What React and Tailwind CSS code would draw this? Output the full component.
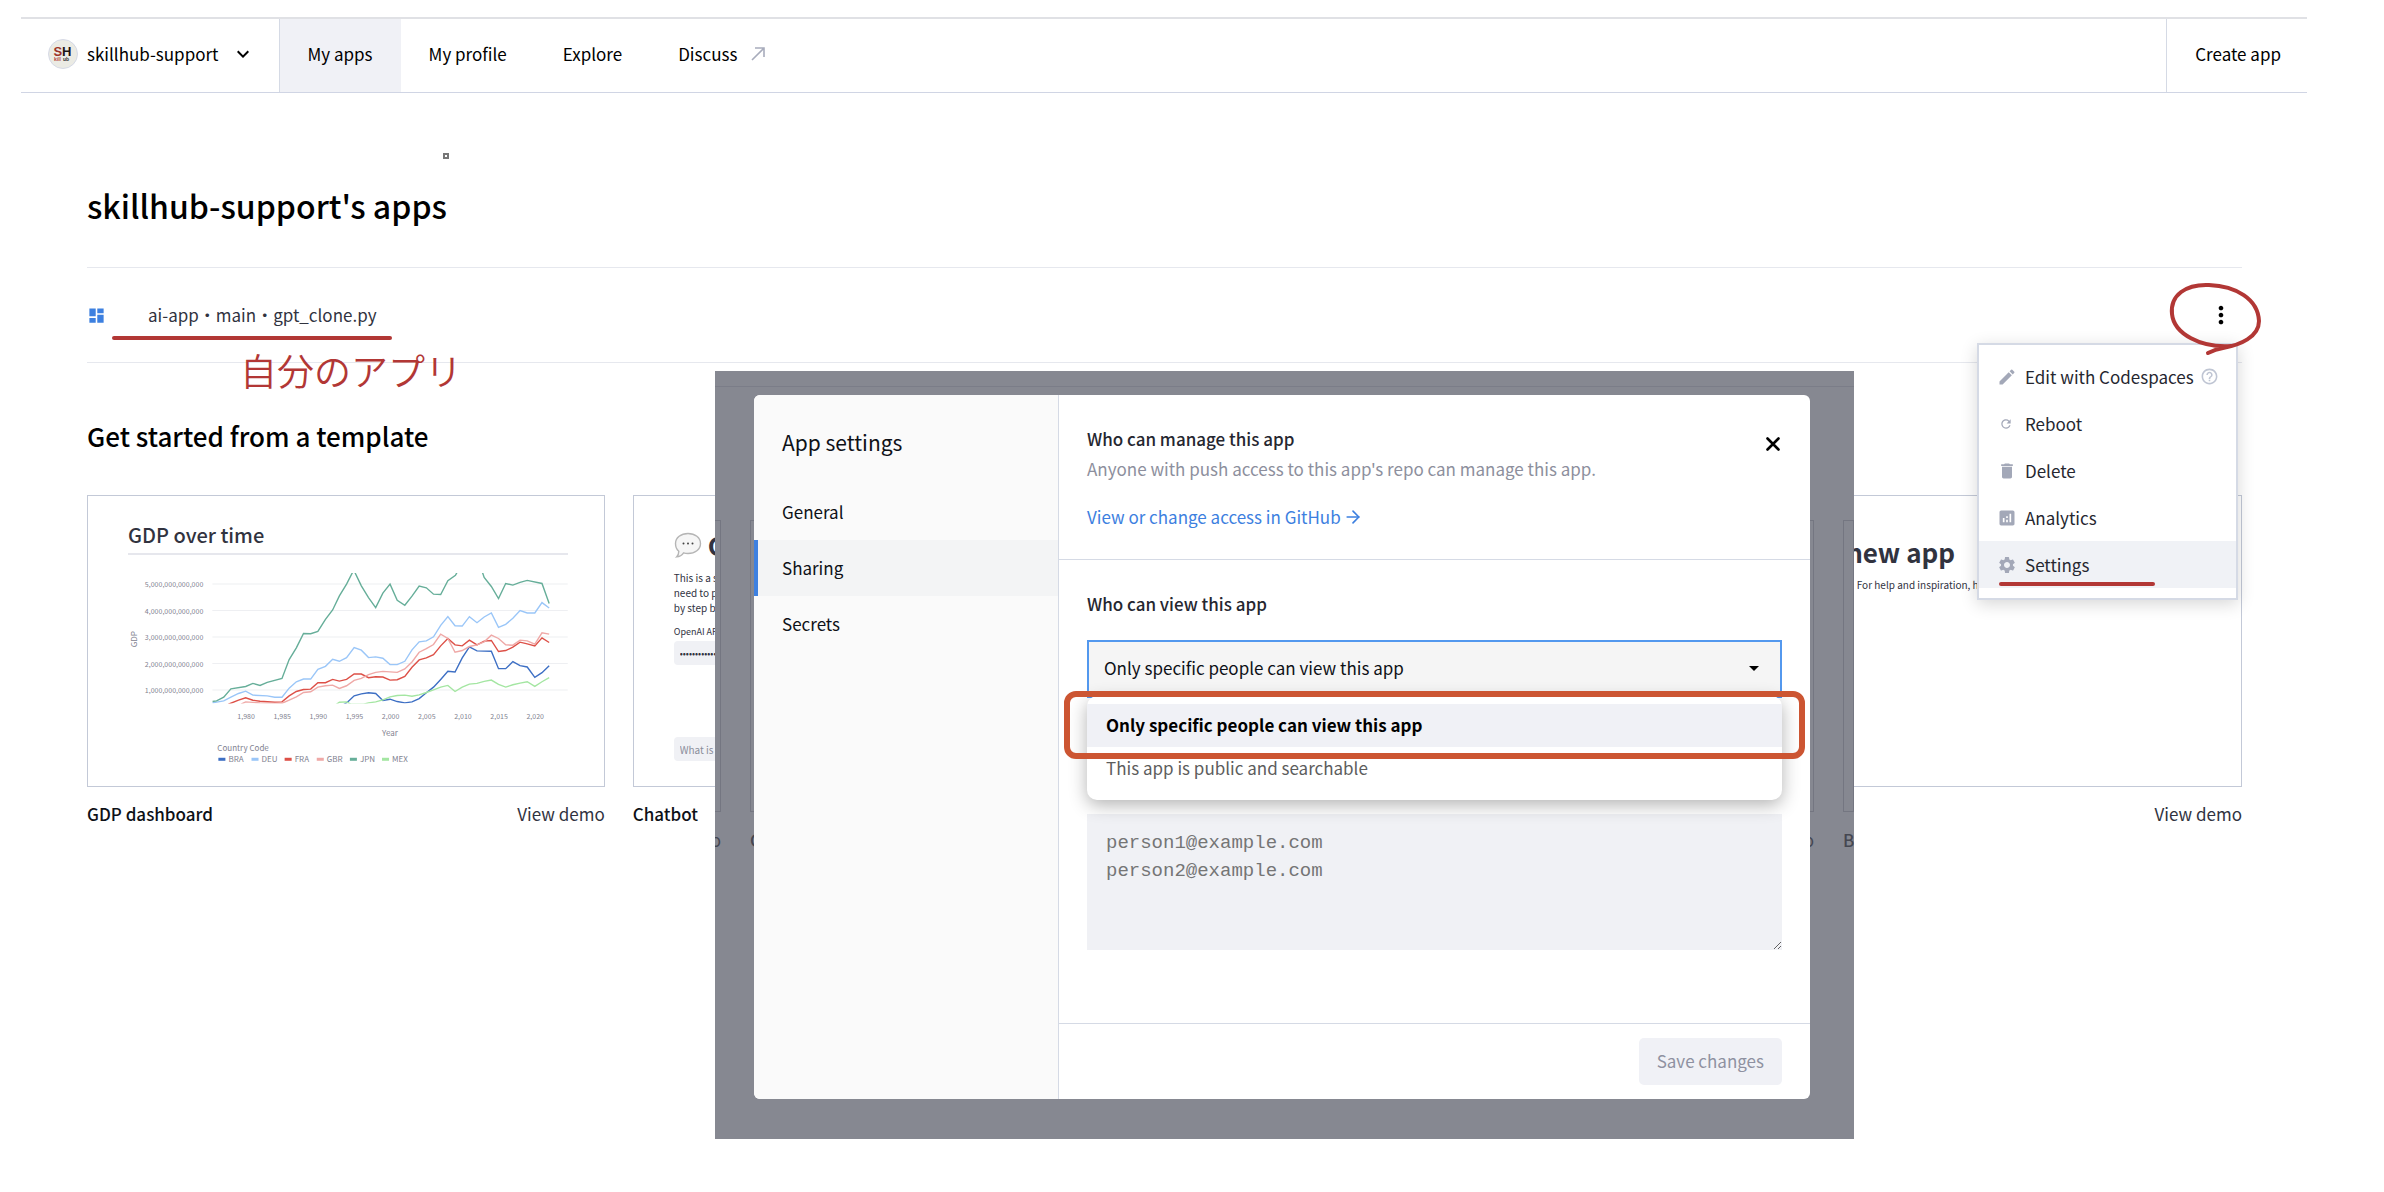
import { useState } from "react";
import { FiArrowRight } from "react-icons/fi";
import {
  MdAnalytics,
  MdArrowDropDown,
  MdDashboard,
  MdDelete,
  MdEdit,
  MdHelpOutline,
  MdKeyboardArrowDown,
  MdMoreVert,
  MdRefresh,
  MdSettings,
} from "react-icons/md";

const NAV_LINKS = ["My apps", "My profile", "Explore"];

const MENU_ITEMS = [
  { label: "Edit with Codespaces", icon: MdEdit, help: true },
  { label: "Reboot", icon: MdRefresh, small: true },
  { label: "Delete", icon: MdDelete },
  { label: "Analytics", icon: MdAnalytics },
  { label: "Settings", icon: MdSettings, active: true },
];

const VIEW_OPTIONS = ["Only specific people can view this app", "This app is public and searchable"];

const Y_TICKS = [5, 4, 3, 2, 1];
const X_TICKS = ["1,980", "1,985", "1,990", "1,995", "2,000", "2,005", "2,010", "2,015", "2,020"];

const SERIES = [
  {
    code: "BRA",
    color: "#3d6fc4",
    x: 90,
    points:
      "672,910 682,902 698,883 715,877 732,874 749,876 766,897 783,893 800,900 818,904 835,901 852,891 869,874 886,857 903,834 920,810 937,812 954,770 971,737 989,749 1023,750 1040,802 1057,802 1074,781 1091,793 1108,797 1126,828 1143,814 1160,793",
  },
  {
    code: "DEU",
    color: "#9ac6f8",
    x: 123,
    points:
      "362,904 389,898 406,887 424,876 441,869 458,881 492,883 510,887 527,887 544,860 561,841 578,833 595,833 612,804 630,795 647,774 663,780 680,769 698,739 715,747 732,769 749,767 766,771 783,790 800,790 818,780 835,746 852,722 869,719 886,707 903,673 920,647 937,674 954,675 971,647 989,665 1006,648 1023,636 1040,679 1057,670 1074,652 1091,629 1108,636 1126,636 1143,605 1160,621",
  },
  {
    code: "FRA",
    color: "#dd5047",
    x: 156,
    points:
      "400,908 424,896 441,889 458,896 475,899 510,902 527,901 544,883 561,870 578,864 595,863 612,844 630,844 647,834 663,839 680,834 698,818 715,818 732,829 749,826 766,827 783,836 800,835 818,825 835,798 852,776 869,770 886,760 903,734 920,712 937,731 954,734 971,717 989,731 1006,720 1023,718 1040,751 1057,748 1074,738 1091,723 1108,728 1126,734 1143,710 1160,724",
  },
  {
    code: "GBR",
    color: "#efa9a7",
    x: 188,
    points:
      "430,908 441,901 475,904 527,905 544,896 561,886 578,873 595,871 612,857 630,853 647,851 663,861 680,853 698,837 715,831 732,820 749,813 766,810 800,813 818,803 835,782 852,753 869,742 886,730 903,699 920,712 937,753 954,748 971,736 989,731 1006,722 1023,702 1040,712 1057,731 1074,732 1091,717 1108,719 1126,729 1143,695 1160,699",
  },
  {
    code: "JPN",
    color: "#66ae99",
    x: 221,
    points:
      "362,900 372,898 389,887 406,862 441,855 458,846 475,852 492,843 527,831 544,775 561,740 578,697 595,698 612,691 630,655 647,627 663,585 680,550 697,508 715,555 732,590 749,620 766,577 783,550 800,598 818,613 835,586 852,556 869,561 886,580 903,581 920,540 938,524 948,500 998,500 1006,530 1023,557 1040,593 1057,548 1074,553 1091,545 1108,539 1143,548 1160,608",
  },
  {
    code: "MEX",
    color: "#a4e6a2",
    x: 253,
    points:
      "655,909 663,902 680,901 690,908 720,908 732,904 749,901 766,895 783,886 800,882 818,881 835,884 852,880 869,873 886,865 903,857 920,852 937,870 954,857 971,848 989,846 1006,840 1023,836 1040,849 1057,857 1074,850 1091,845 1108,841 1126,855 1143,841 1160,829",
  },
];

function GdpChart() {
  return (
    <svg viewBox="0 0 438 206" className="mt-1.5 block w-full text-[7px]" fill="#7f8290">
      {Y_TICKS.map((tick, i) => (
        <g key={tick}>
          <text x="75" y={26 + i * 26.4} textAnchor="end">{`${tick},000,000,000,000`}</text>
          <line x1="84" x2="438" y1={23 + i * 26.4} y2={23 + i * 26.4} stroke="#eeeff2" />
        </g>
      ))}
      <svg x="84" y="12" width="354" height="130" viewBox="362 517 842 389" preserveAspectRatio="none">
        {SERIES.map((s) => (
          <polyline
            key={s.code}
            points={s.points}
            fill="none"
            stroke={s.color}
            strokeWidth="1.4"
            vectorEffect="non-scaling-stroke"
          />
        ))}
      </svg>
      {X_TICKS.map((tick, i) => (
        <text key={tick} x={117.6 + i * 36} y="157" textAnchor="middle">
          {tick}
        </text>
      ))}
      <g className="text-[8px]">
        <text x="261" y="174" textAnchor="middle">Year</text>
        <text transform="translate(9 78) rotate(-90)" textAnchor="middle">GDP</text>
        <text x="89" y="189">Country Code</text>
        {SERIES.map((s) => (
          <g key={s.code}>
            <rect x={s.x} y="196" width="7" height="3" fill={s.color} />
            <text x={s.x + 10} y="200">{s.code}</text>
          </g>
        ))}
      </g>
    </svg>
  );
}

function SpeechBubble() {
  return (
    <svg viewBox="0 0 28 28" className="h-7 w-7 shrink-0">
      <path
        d="M14 2.5c7 0 12.500 4 12.500 10S21 22.500 14 22.500c-1.600 0-3-.2-4.400-.6-1.600 2.400-4 3.800-7 4 1.500-1.500 2.200-3.300 2.200-5.600C2.700 18.500 1.500 15.700 1.500 12.500c0-6 5.500-10 12.500-10z"
        fill="#f6f6f6"
        stroke="#b5b5b5"
        strokeWidth="1.4"
      />
      <circle cx="9.500" cy="12.500" r="1" fill="#444" />
      <circle cx="14" cy="12.500" r="1" fill="#444" />
      <circle cx="18.500" cy="12.500" r="1" fill="#444" />
    </svg>
  );
}

function TemplateCard({ title, children }) {
  return (
    <article className="min-w-0">
      <div className="h-[292px] overflow-hidden border border-[#c3c9d7] pr-9 pl-10">{children}</div>
      <div className="mt-[13px] flex justify-between leading-7">
        <h3 className="font-medium text-[#0e1117]">{title}</h3>
        <a href="#demo" className="text-[#31333f]">View demo</a>
      </div>
    </article>
  );
}

function AppMenu() {
  return (
    <div className="absolute top-[75px] right-1 w-[261px] border-2 border-[#d5dae5] bg-white pt-2 pb-2.5 shadow-[0_4px_16px_rgba(0,0,0,0.16)]">
      {MENU_ITEMS.map(({ label, icon: Icon, help, small, active }) => (
        <button
          key={label}
          className={`flex h-[47px] w-full items-center pl-[18px] text-left text-[#262730] ${active ? "bg-[#f0f2f6]" : ""}`}
        >
          <span className="mr-2 flex w-5">
            <Icon className={small ? "ml-0.5 h-3.5 w-3.5 text-[#a3a8b8]" : "h-5 w-5 text-[#a3a8b8]"} />
          </span>
          {label}
          {help && <MdHelpOutline className="ml-1.5 h-[19px] w-[19px] text-[#bfc5d3]" />}
        </button>
      ))}
      <span className="absolute bottom-3 left-5 h-1 w-[156px] rounded-full bg-[#b23735]" />
    </div>
  );
}

function BackdropCard({ title, className }) {
  return (
    <div className={`overflow-hidden ${className}`}>
      <div className="h-[292px] border border-[#747681]" />
      <div className="mt-3.5 leading-7 font-medium whitespace-nowrap text-[#454751]">{title}</div>
    </div>
  );
}

function SettingsDialog() {
  const [access, setAccess] = useState(VIEW_OPTIONS[0]);

  return (
    <div className="absolute top-[371px] left-[715px] w-[1139px] overflow-hidden bg-[#868891] pt-6 pr-11 pb-10 pl-[39px]">
      <div className="absolute inset-x-0 top-[15px] border-t border-[#7b7d88] pt-[133px]">
        <div className="flex gap-[29px]">
          <div className="w-1.5 shrink-0">
            <div className="h-[292px] border border-l-0 border-[#747681]" />
            <div className="mt-3.5 flex justify-end leading-7 text-[#454751]">o</div>
          </div>
          <BackdropCard title="Chatbot" className="flex-1" />
          <div className="flex-1">
            <div className="h-[292px] border border-[#747681]" />
            <div className="mt-3.5 text-right leading-7 text-[#454751]">View demo</div>
          </div>
          <BackdropCard title="Blank app" className="w-[11px] shrink-0" />
        </div>
      </div>

      <section className="relative flex rounded-md bg-white" role="dialog" aria-label="App settings">
        <aside className="w-[305px] shrink-0 rounded-l-md border-r border-[#d5dae5] bg-[#fafafa] text-[#0e1117]">
          <h2 className="px-7 pt-[29px] pb-6 text-[21px] leading-9">App settings</h2>
          {["General", "Sharing", "Secrets"].map((tab) => (
            <button
              key={tab}
              className={`block h-14 w-full border-l-4 pl-6 text-left ${
                tab === "Sharing" ? "border-[#3d80e0] bg-[#f3f4f5]" : "border-transparent"
              }`}
            >
              {tab}
            </button>
          ))}
        </aside>

        <div className="min-w-0 flex-1">
          <div className="relative border-b border-[#d5dae5] px-7 pt-[29px] pb-[27px] leading-[30px]">
            <h3 className="font-medium text-[#262730]">Who can manage this app</h3>
            <p className="text-[#8d8f9d]">Anyone with push access to this app's repo can manage this app.</p>
            <a href="#github" className="mt-[18px] inline-flex items-center text-[#3d80e0]">
              View or change access in GitHub
              <FiArrowRight className="ml-0.5 h-5 w-5" />
            </a>
            <button aria-label="Close" className="absolute top-[42px] right-[30px]">
              <svg viewBox="0 0 14 14" className="h-3.5 w-3.5" stroke="black" strokeWidth="2.6" strokeLinecap="round">
                <path d="M1.500 1.500L12.500 12.500M12.500 1.500L1.500 12.500" />
              </svg>
            </button>
          </div>

          <div className="px-7 pt-7 pb-[73px]">
            <label htmlFor="access" className="block leading-8 font-medium text-[#262730]">
              Who can view this app
            </label>
            <div className="relative mt-5">
              <select
                id="access"
                value={access}
                onChange={(e) => setAccess(e.target.value)}
                className="block h-[58px] w-full appearance-none border-2 border-[#5398ee] bg-[#f5f5f5] px-[15px] pb-0.5 text-[#0e1117] outline-none"
              >
                {VIEW_OPTIONS.map((option) => (
                  <option key={option}>{option}</option>
                ))}
              </select>
              <MdArrowDropDown className="pointer-events-none absolute top-4 right-4 h-6 w-6 text-black" />

              <ul className="absolute inset-x-0 top-14 rounded-[10px] bg-white pt-2 pb-2.5 shadow-[0_5px_18px_rgba(0,0,0,0.3)]">
                {VIEW_OPTIONS.map((option) => (
                  <li
                    key={option}
                    className={`h-[43px] px-[19px] leading-[42px] ${
                      option === access ? "bg-[#f0f1f6] font-bold text-black" : "text-[#5d5d5d]"
                    }`}
                  >
                    {option}
                  </li>
                ))}
              </ul>
              <div className="absolute -inset-x-[23px] top-[51px] h-[68px] rounded-xl border-6 border-[#cc5532]" />
            </div>

            <textarea
              aria-label="Viewer emails"
              placeholder={"person1@example.com\nperson2@example.com"}
              className="mt-[116px] block h-[136px] w-full bg-[#f0f1f5] px-[19px] py-[15px] font-['Liberation_Mono',monospace] text-[19px] leading-7 outline-none placeholder:text-[#757575]"
            />
          </div>

          <div className="flex justify-end border-t border-[#d5dae5] px-7 py-3.5">
            <button disabled className="h-[47px] rounded-[5px] bg-[#f0f1f6] px-[18px] pb-0.5 text-[#8f91a1]">
              Save changes
            </button>
          </div>
        </div>
      </section>
    </div>
  );
}

function App() {
  return (
    <div className="relative min-h-screen bg-white pt-[17px] font-['Noto_Sans_CJK_JP',sans-serif] text-[17px] text-black">
      <header className="mr-[77px] ml-[21px] flex h-[76px] border-t-2 border-b border-t-[#e0e1e5] border-b-[#d0d5e4]">
        <button className="flex items-center border-r border-[#d5dae5] pr-6 pb-1 pl-[27px]">
          <svg viewBox="0 0 30 30" className="mr-[9px] h-[30px] w-[30px]">
            <circle cx="15" cy="15" r="14.500" fill="#ebebe4" stroke="#d5d9e6" />
            <g className="font-['Liberation_Sans',sans-serif] font-bold">
              <text x="5.500" y="17" fontSize="13" fill="#9c3227">S</text>
              <text x="14" y="17" fontSize="13" fill="#1c1414">H</text>
              <text x="6" y="22" fontSize="5" fill="#b5443c">kill</text>
              <text x="15" y="22" fontSize="5" fill="#333">ub</text>
            </g>
          </svg>
          skillhub-support
          <MdKeyboardArrowDown className="ml-3 h-6 w-6" />
        </button>
        <nav className="flex">
          {NAV_LINKS.map((link) => (
            <a
              key={link}
              href="#nav"
              className={`flex items-center px-7 pb-1 ${link === "My apps" ? "bg-[#f0f1f6]" : ""}`}
            >
              {link}
            </a>
          ))}
          <a href="#discuss" className="flex items-center px-7 pb-1">
            Discuss
            <svg viewBox="0 0 14 14" className="ml-3.5 h-3.5 w-3.5" fill="none" stroke="#a8acbc" strokeWidth="1.6">
              <path d="M1 13L13 1M4 1H13V10" />
            </svg>
          </a>
        </nav>
        <button className="ml-auto border-l border-[#d5dae5] pr-[26px] pb-1 pl-7">Create app</button>
      </header>

      <span className="absolute top-[153px] left-[443px] h-1.5 w-1.5 border-2 border-[#777]" />

      <main className="mr-[142px] ml-[87px]">
        <h1 className="mb-[38px] pt-[88px] text-[32px] leading-[48px] font-medium">skillhub-support's apps</h1>

        <div className="relative flex h-24 items-center border-y border-[#e6e8ee]">
          <MdDashboard className="h-[19px] w-[19px] text-[#3d80e0]" />
          <a href="#app" className="ml-[42px] text-[#31333f]">ai-app・main・gpt_clone.py</a>
          <button aria-label="App menu" className="ml-auto pr-[7px]">
            <MdMoreVert className="h-7 w-7" />
          </button>
          <span className="absolute bottom-[22px] left-[25px] h-1 w-[280px] rounded-full bg-[#b23735]" />
          <p className="absolute top-[75px] left-[153px] text-[37px] leading-[54px] font-[350] text-[#b23735]">
            自分のアプリ
          </p>
          <div className="absolute inset-y-0 right-0 z-10">
            <AppMenu />
            <svg
              viewBox="0 0 100 80"
              className="pointer-events-none absolute top-[11px] -right-6 h-20 w-[100px]"
              fill="none"
              stroke="#b23735"
              strokeLinecap="round"
              strokeWidth="4"
            >
              <path d="M65 67C35 69 8 55 6 35C4 16 20 5 43 6C70 7 92 20 93 42C93 58 74 66 57 69C51 70 46 72 42 74" />
            </svg>
          </div>
        </div>

        <h2 className="mt-[53px] mb-[39px] text-[26px] leading-10 font-medium">Get started from a template</h2>

        <div className="grid grid-cols-4 gap-7 text-[#31333f]">
          <TemplateCard title="GDP dashboard">
            <h4 className="border-b-2 border-[#e6e7ed] pt-[25px] pb-1 text-xl leading-7 font-medium">GDP over time</h4>
            <GdpChart />
          </TemplateCard>
          <TemplateCard title="Chatbot">
            <h4 className="flex items-center gap-1.5 pt-[30px] text-[26px] leading-[38px] font-bold">
              <SpeechBubble />
              Chatbot
            </h4>
            <p className="mt-1.5 text-[10px] leading-[15px] whitespace-nowrap">
              This is a simple
              <br />
              need to provide
              <br />
              by step by
            </p>
            <label className="mt-[9px] block text-[9px] leading-[15px]">
              OpenAI API Key
              <input
                type="password"
                defaultValue="00000000000000"
                className="mt-0.5 block h-6 w-full rounded bg-[#f0f1f5] px-1.5 text-[9px]"
              />
            </label>
            <input
              aria-label="Message"
              placeholder="What is up?"
              className="mt-[72px] block h-6 w-full rounded bg-[#f0f1f5] px-1.5 text-[10px] placeholder:text-[#8b8e9b]"
            />
          </TemplateCard>
          <TemplateCard title="Slides" />
          <TemplateCard title="Blank app">
            <h4 className="pt-[37px] text-[26px] leading-[38px] font-bold">🎈 My new app</h4>
            <p className="mt-1 text-[10px] leading-5 whitespace-nowrap">
              Let's start building! For help and inspiration, head over to docs.streamlit.io.
            </p>
          </TemplateCard>
        </div>
      </main>

      <SettingsDialog />
    </div>
  );
}

export default App;
